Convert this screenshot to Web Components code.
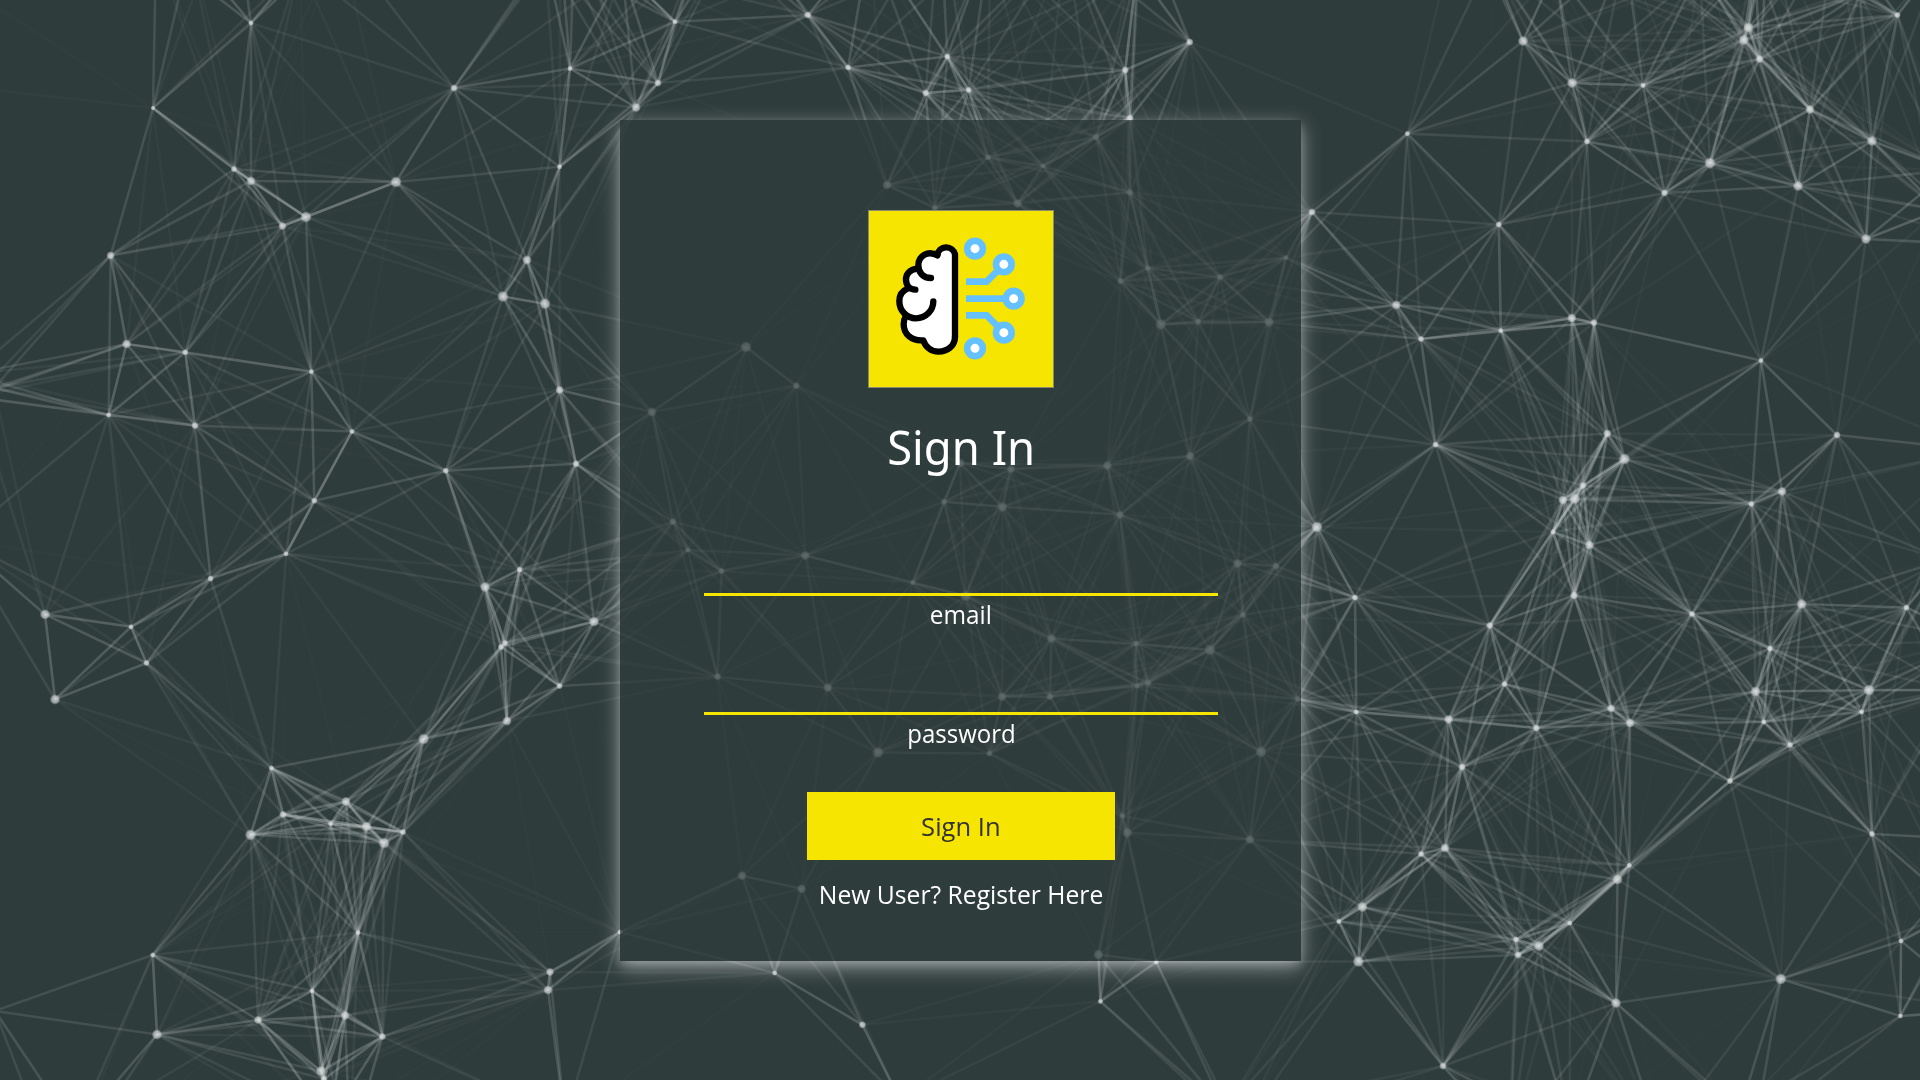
<!DOCTYPE html>
<html lang="en">
<head>
<meta charset="utf-8">
<title>Sign In</title>
<style>
html,body{margin:0;height:100%;overflow:hidden;background:#2f3c3c}
</style>
</head>
<body>
<sign-in-page>
  <sign-in-card>
    <brain-logo></brain-logo>
    <fit-text class="title" width="148">Sign In</fit-text>
    <line-field name="email" type="email" label="email" label-width="62"></line-field>
    <line-field name="password" type="password" label="password" label-width="108.5"></line-field>
    <solid-button><fit-text width="79.5">Sign In</fit-text></solid-button>
    <fit-text class="link" width="284.5">New User? Register Here</fit-text>
  </sign-in-card>
</sign-in-page>
<script>
const make=(name,html,init)=>customElements.define(name,class extends HTMLElement{
  constructor(){
    super();
    this.attachShadow({mode:'open'}).innerHTML=html;
  }
  connectedCallback(){ if(init) init.call(this,this.shadowRoot); }
});

make('brain-logo',`<style>
:host{display:block;width:186px;height:178px}
svg{display:block;width:100%;height:100%}
</style>
<svg viewBox="24 30 558 534" preserveAspectRatio="none" aria-hidden="true">
<rect x="24" y="30" width="558" height="534" fill="#8a8a72"/>
<rect x="27" y="33" width="552" height="528" fill="#f6e500"/>
<path fill="#fff" d="M285 410V163A27 27 0 0 0 232 165A38 38 0 0 0 175 206A37 37 0 0 0 146 264A51 51 0 0 0 137 346A50 50 0 0 0 190 421A49 49 0 0 0 285 410Z"/>
<g fill="none" stroke="#000" stroke-width="19" stroke-linecap="round" stroke-linejoin="round">
<path d="M285 410V163A27 27 0 0 0 232 165"/>
<path d="M232 166C204 150 175 168 175 196C175 218 190 234 213 234"/>
<path d="M172 206C148 208 137 224 138 240C139 257 149 269 166 269"/>
<path d="M144 265C127 272 118 286 118 303C118 332 140 355 168 355C197 355 220 332 220 304"/>
<path d="M137 349C132 357 131 365 131 373C131 401 153 424 190 421C196 441 214 455 235 455C264 455 285 436 285 410"/>
</g>
<g fill="none" stroke="#65c0ff" stroke-width="20">
<path d="M318 245H380L416 209M318 296H440M318 346H380L416 382"/>
</g>
<g fill="#fff" stroke="#65c0ff" stroke-width="20">
<circle cx="345" cy="146" r="23.5"/><circle cx="431.500" cy="193" r="23.5"/><circle cx="461" cy="296" r="23.5"/><circle cx="431.500" cy="398" r="23.5"/><circle cx="345" cy="445" r="23.5"/>
</g>
</svg>`);

make('line-field',`<style>
:host{display:flex;flex-direction:column;gap:2px;width:514px}
input{box-sizing:border-box;width:100%;height:43px;margin:0;padding:0 8px;border:0;border-bottom:3px solid #f6e500;border-radius:0;background:transparent;color:#fff;font:inherit;text-align:center;outline:none}
</style><input><div></div>`,function(root){
  const i=root.querySelector('input'),t=document.createElement('fit-text');
  i.name=this.getAttribute('name');
  i.type=this.getAttribute('type');
  t.setAttribute('width',this.getAttribute('label-width'));
  t.textContent=this.getAttribute('label');
  root.querySelector('div').replaceWith(t);
});

make('solid-button',`<style>
:host{display:block;width:308px;height:68px}
button{display:flex;align-items:center;justify-content:center;width:100%;height:100%;margin:0;padding:0;border:0;background:#f6e500;color:#333;font:inherit}
</style><button><slot></slot></button>`);

make('sign-in-card',`<style>
:host{position:relative;box-sizing:border-box;display:flex;flex-direction:column;align-items:center;width:681px;height:841px;padding:90px 0 0 1px;background:rgba(47,60,60,.7);box-shadow:0 4px 8px rgba(255,255,255,.2),0 6px 20px rgba(255,255,255,.46);color:#fff;font:25px/32px "Open Sans","Noto Sans",sans-serif}
::slotted(.title){margin-top:27px;font:48px/64px "Noto Sans",sans-serif}
::slotted(line-field[name=email]){margin-top:74px}
::slotted(line-field[name=password]){margin-top:42px}
::slotted(solid-button){margin-top:43px}
::slotted(.link){margin-top:18px}
</style><slot></slot>`);

/* x, y, radius of each particle */
const P=[
251,23,2,153,108,1.5,454,88,3,570,68.5,2,636,107.5,4,234,169,2.5,251,181,4,396,182,5,306,217,5,282.5,226,3.5,559.6,166.7,2,110.6,255.5,3.5,527,260,4,503,296.5,5,545,303.7,5,126.5,344,4,185.3,352.3,2.5,311.4,371.6,2,108.6,415,2,195,425.6,3,352,431.5,2,559.6,390,3.5,445.7,470.7,2.5,576,463.8,3,314.3,500.7,2.5,
286,553.8,2,210.6,578.6,2.5,45,614.4,4.5,131,626.8,2,146.5,663,2.5,55,699.4,4.5,519.6,569.6,2.5,485,587,4.5,594,621.6,4.5,505,643,2.5,501,647,2.5,559.6,686,2.5,507,721,4,423.7,739,5,271.4,768,2,346,801.4,4,283,814.4,3,330.6,823.7,2,366.5,826.5,4.5,403,832,2.5,250.6,834.8,5,384,843,5,358,932.6,2,152.7,955,2,312,990.8,2,345,1015.5,4,258,1020,3.5,157,1034.5,4.5,382.4,1036.6,3,321,1071,4.5,324,1079,3,550,972,3.5,548,990,4,
675,21.7,2,658,83,3,807.8,15,3,848,67.5,2.5,947.3,56.5,2.5,925.7,93,3,968.6,90,2.5,1125.3,70,3,1189.8,42,3,1130,118,3,1096,137,3,988,157.4,2.5,1043,166,2,887,185,4,1017.5,203.5,4,934.7,208,2.5,1130,192.5,3,1147.8,268,2.5,1120.4,281,2.5,1220,277,2.5,1160.8,324.4,5,1198,321.6,2.5,1269,322,4.5,746,347,5,796.3,385.7,3,652,412,4,1250,419,2.5,1190,456,4,1107.3,465.6,4,1011,469,3.5,960,463,4,944,501.7,2.5,1002.4,507,4.5,1120,514.8,3.5,673,521.7,3,
688,550,2,721.6,571,2.5,805.3,555.5,4,912.7,582.4,2,965.7,596,5,1237.6,563.4,4,1276,566,3,1243,614.7,2.5,1051.4,638.5,4,1136,643.6,2.5,1210,650,5,717.6,676.7,3,827.8,687.7,4,1002,696.7,4,1050,696.7,3,1137,686,2,1148,683,3,878,752.5,5,989.4,753.5,2.5,1261,751.8,5,1122.4,816,2.5,1127.3,832.7,4.5,1249.8,839.6,4,742,875.7,4,801.6,888.8,4,1098.4,954.6,4.5,1156.3,962,2,774.7,973,2,862.4,1024.8,3,1100.4,1001.4,2,620,932,2,1297.6,699,2.5,
1523,41,4.5,1572,83,4.5,1643,85.4,2,1748.6,27.5,4.5,1743.7,40,4.5,1759.6,59,3.5,1897.5,15,2.5,1407.3,133.6,2,1587,141.5,2.5,1810,109.5,4,1872,141,4.5,1710,163,5,1664.5,193,3,1798,186,4.5,1866,239,4.5,1312,212,3,1498.8,224.5,2.5,1286,257.6,2,1396.3,305,4,1571.8,318,4,1594,322.7,3,1421,339,2.5,1500.8,330.6,2,1761,360.5,2,1435.5,444.6,2.5,1607.3,433.5,3.5,1624.5,459,5,1837,435,3,1583,485.5,3,1563,500,4,1574.7,498.6,5,1782,491.4,4,1751.4,503.8,2.5,1317,527,5,1553,532,2,
1589.4,545,4,1355,597.5,2.5,1574,595.4,3.5,1489.8,625.4,3,1692,614,2.5,1801.6,604,4.5,1906.5,607.5,2.5,1770,648.5,2.5,1504.5,684,2.5,1755.5,691.5,4.5,1869,690,5,1356.3,712,2,1448.6,719.4,4,1536.3,728,3,1611,708.4,3.5,1630,723,4,1763.7,722,2,1861.6,712,2,1790,745,2.5,1462,767,3,1730,781,2.5,1872,834,2.5,1421,854,2.5,1445,848,4,1629.4,865.4,2,1617.5,879.5,4.5,1362.4,907,4.5,1338.8,921.5,2,1569.8,923,2,1516,939.5,2.5,1539,946,4.5,1518,955,3,1358.4,961.5,5,1616,1003,4.5,1780.8,979,5,1901,941,2,1900.4,1016,2,1443,1066,3,
/* particles beyond the edges of the window */
156,-50,2,-60,-30,2,-95,80,2,190,-50,2,232,-110,2,300,-35,2,340,-60,2,560,-60,2,575,-75,2,545,-45,2,622,-30,2,706,-70,2,870,-60,2,940,-90,2,990,-60,2,740,-80,2,1137,-30,2,1142,-80,2,1065,-60,2,1460,-90,2,1490,-40,2,1555,-30,2,1625,-50,2,1700,-30,2,1755,-40,2,1770,-70,2,1860,-6,2,1835,-70,2,1940,-40,2,
1950,170,2,1940,210,2,1990,245,2,1975,450,2,1945,560,2,1975,640,2,1955,690,2,1960,910,2,1990,840,2,1985,1010,2,
75,1130,2,60,1180,2,330,1120,2,350,1150,2,565,1120,2,900,1100,2,1225,1110,2,1240,1130,2,1510,1140,2,1570,1130,2,1740,1110,2,1755,1130,2,1660,1140,2,-6,388,2,-30,374,2,-25,397,2,-5,1011,2,-40,540,2];

make('particle-net',`<style>
:host{display:block}
canvas{display:block;width:100%;height:100%}
</style><canvas width="1920" height="1080"></canvas>`,function(root){
  const c=root.querySelector('canvas').getContext('2d'),reach=270;
  c.strokeStyle='#cdd3d2';
  c.lineWidth=2.6;
  for(let i=0;i<P.length;i+=3) for(let j=i+3;j<P.length;j+=3){
    const d=Math.hypot(P[i]-P[j],P[i+1]-P[j+1]);
    if(d>reach) continue;
    c.globalAlpha=.35*(1-d/reach);
    c.beginPath();
    c.moveTo(P[i],P[i+1]);
    c.lineTo(P[j],P[j+1]);
    c.stroke();
  }
  c.globalAlpha=1;
  for(let i=0;i<P.length;i+=3){
    const x=P[i],y=P[i+1],r=P[i+2]+.9,g=c.createRadialGradient(x,y,0,x,y,r);
    g.addColorStop(0,'rgba(222,226,225,.78)');
    g.addColorStop(.6,'rgba(215,220,219,.66)');
    g.addColorStop(1,'rgba(205,212,211,0)');
    c.fillStyle=g;
    c.beginPath();
    c.arc(x,y,r,0,7);
    c.fill();
  }
});

make('sign-in-page',`<style>
:host{position:relative;box-sizing:border-box;display:flex;justify-content:center;align-items:flex-start;width:1920px;height:1080px;padding:120px 0 0 1px;overflow:hidden;background:#2f3c3c}
particle-net{position:absolute;inset:0}
</style><particle-net></particle-net><slot></slot>`);

/* Text condensed to a fixed width; defined last, once the fonts of its parents apply */
make('fit-text',`<style>
:host{display:block;white-space:nowrap;text-align:center}
span{display:inline-block}
</style><span><slot></slot></span>`,function(root){
  const s=root.querySelector('span');
  s.style.transform='scaleX('+(+this.getAttribute('width')/s.getBoundingClientRect().width).toFixed(4)+')';
});
</script>
</body>
</html>
